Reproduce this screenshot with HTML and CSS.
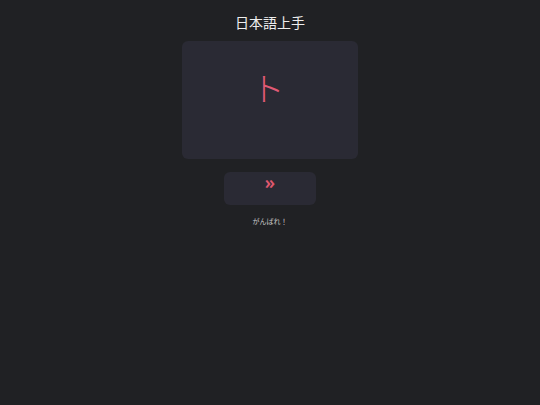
FILE: index.html
```html
<!DOCTYPE html>
<html lang="ja">
<head>
    <meta charset="UTF-8">
    <meta name="viewport" content="width=device-width, initial-scale=1.0">
    <title>日本語上手</title>
    <link rel="stylesheet" href="styles.css">
</head>
<body>
    <h1 class="title">日本語上手</h1>

    <div class="card">
        <div class="kana">ト</div>
    </div>

    <button class="next-button">»</button>

    <div class="cheer">がんばれ！</div>
</body>
</html>
```

FILE: styles.css
```css
body {
    margin: 0;
    font-family: "Noto Sans", "Noto Sans CJK JP", sans-serif;
    background-color: #202124;
    color: #eeeeee;
    display: flex;
    flex-direction: column;
    align-items: center;
}

.title {
    font-size: 14px;
    font-weight: normal;
    margin: 13px 0 8px;
    line-height: 20px;
}

.card {
    width: 176px;
    height: 118px;
    background-color: #2a2a34;
    border-radius: 6px;
    display: flex;
    justify-content: center;
    padding-top: 28px;
    box-sizing: border-box;
}

.kana {
    font-size: 33px;
    line-height: 40px;
    color: #e05a75;
    font-weight: 300;
    margin-left: -4px;
}

.next-button {
    margin-top: 13px;
    width: 92px;
    height: 33px;
    background-color: #2a2a34;
    border: none;
    border-radius: 6px;
    color: #e0586f;
    font-size: 18px;
    font-weight: 600;
    line-height: 1;
    padding: 0 0 13px;
    font-family: "Noto Sans", sans-serif;
}

.cheer {
    margin-top: 11px;
    font-size: 7px;
    color: #c8c8c8;
    font-family: "Noto Sans CJK JP", sans-serif;
}
```
